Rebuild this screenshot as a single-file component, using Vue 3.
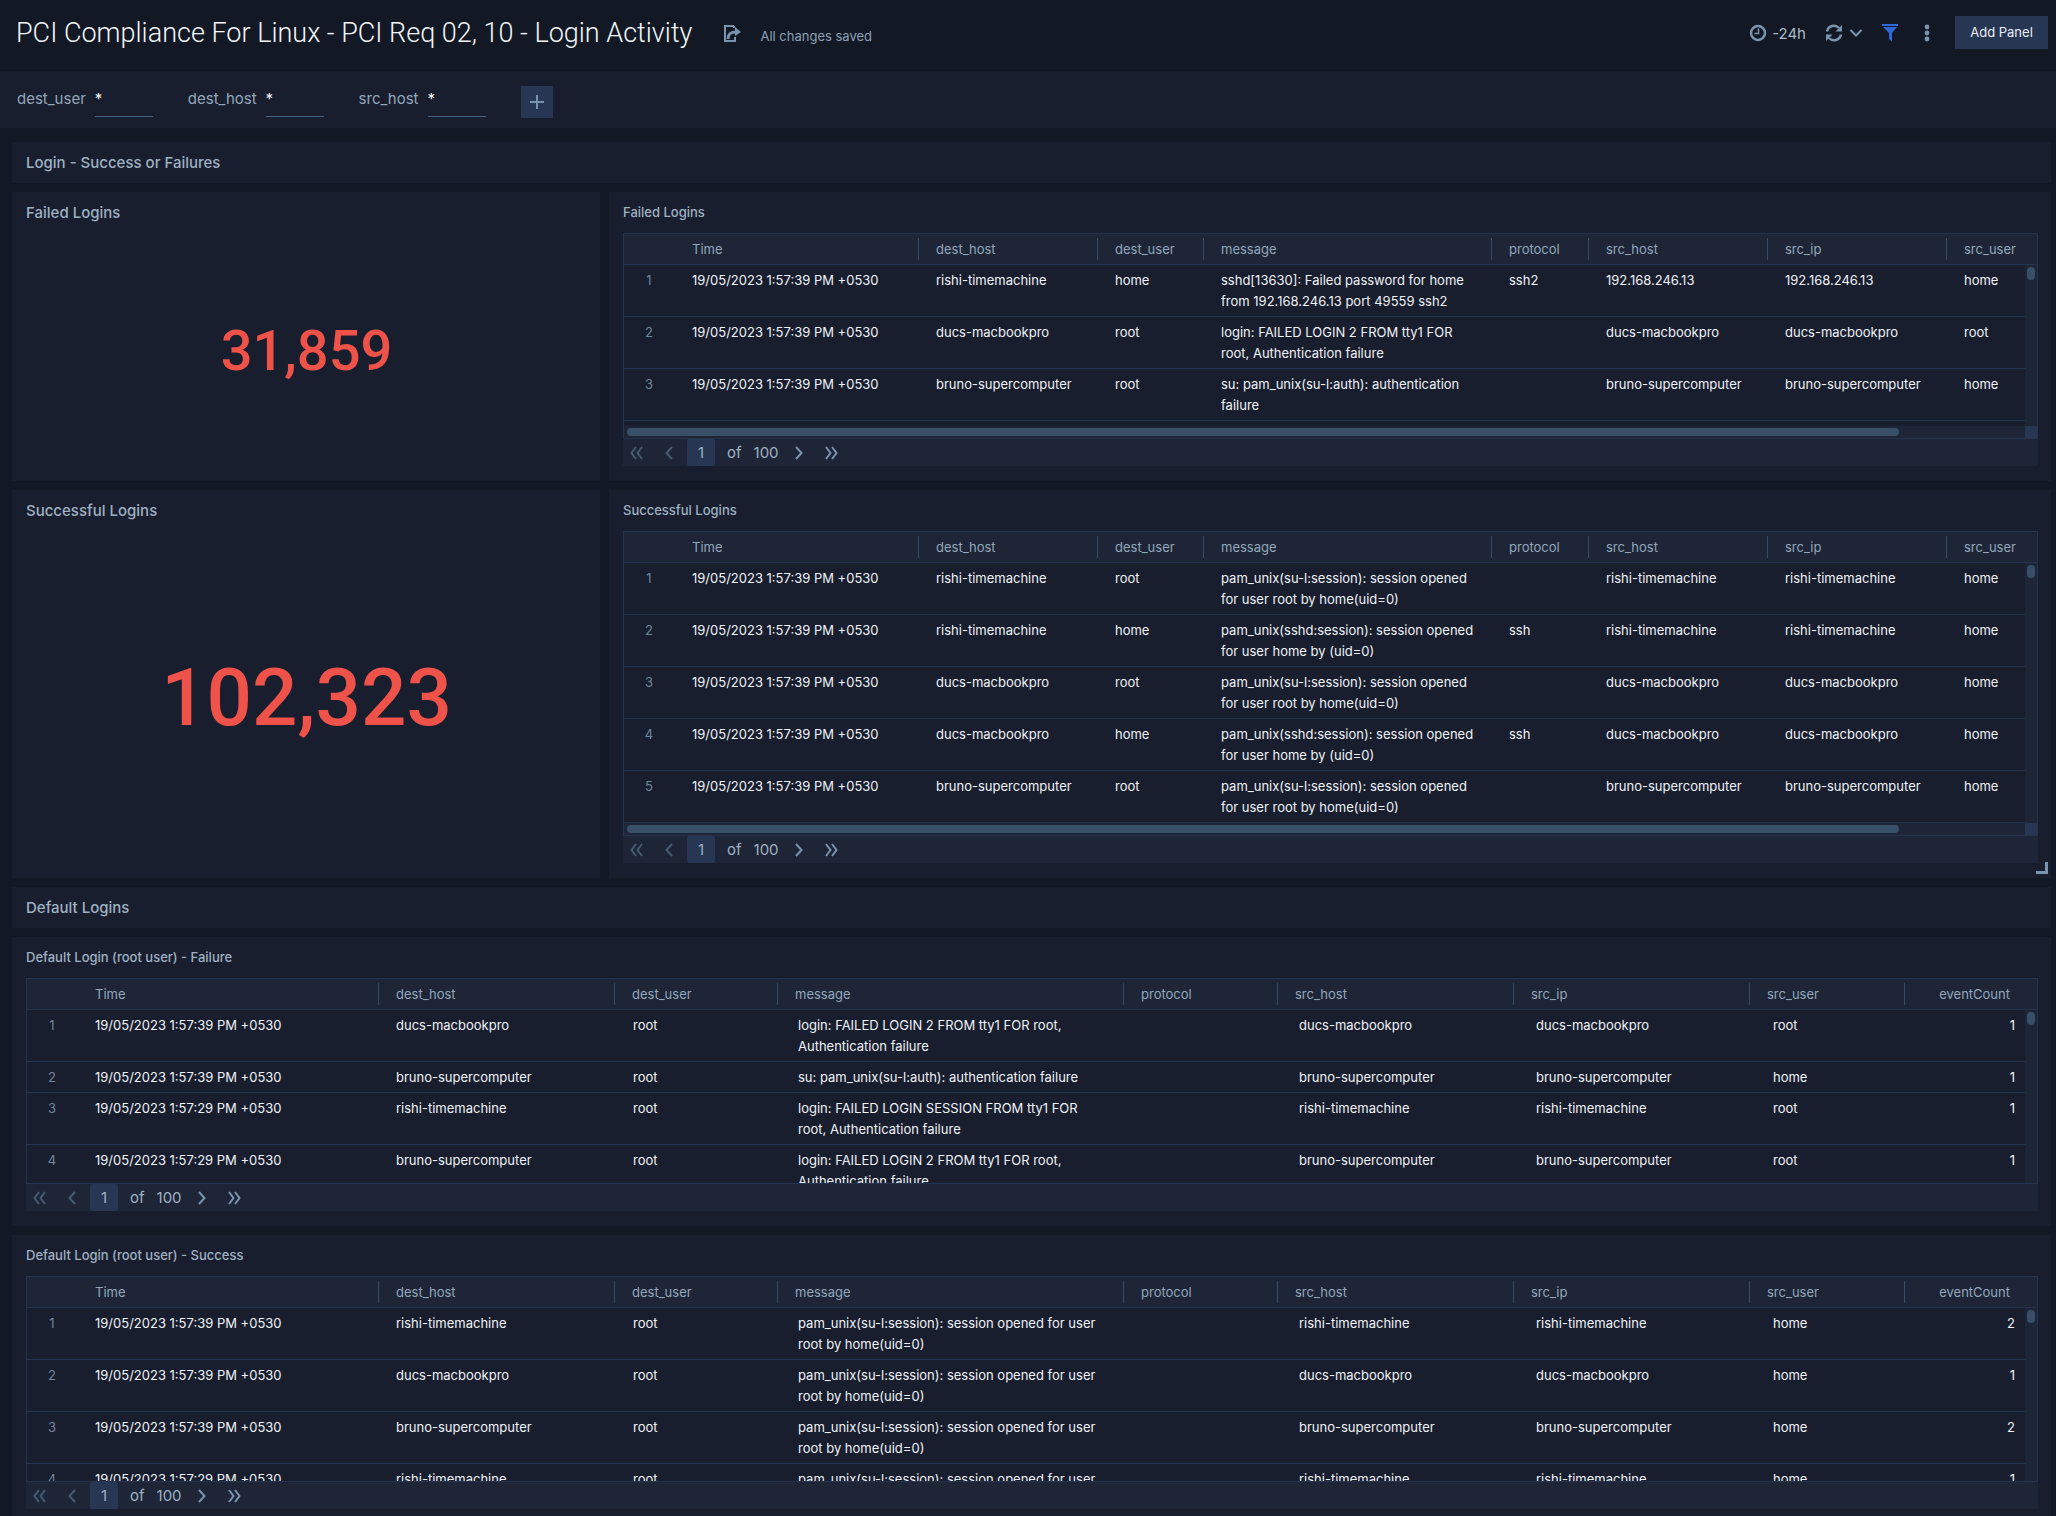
<script setup>
import { ref } from 'vue'

const variables = ref([
  { name: 'dest_user', value: '*' },
  { name: 'dest_host', value: '*' },
  { name: 'src_host', value: '*' },
])

const T39 = '19/05/2023 1:57:39 PM +0530'
const T29 = '19/05/2023 1:57:29 PM +0530'
const RISHI = 'rishi-timemachine'
const DUCS = 'ducs-macbookpro'
const BRUNO = 'bruno-supercomputer'
const SU_OPEN = 'pam_unix(su-l:session): session opened for user root by home(uid=0)'
const SSH_OPEN = 'pam_unix(sshd:session): session opened for user home by (uid=0)'

const names = ['Time', 'dest_host', 'dest_user', 'message', 'protocol', 'src_host', 'src_ip', 'src_user']

const narrow = {
  columns: names,
  head: [50, 244, 179, 106, 288, 97, 179, 179, 91],
  body: [50, 244, 179, 106, 288, 97, 179, 179, 79],
}
const wide = {
  columns: [...names, 'eventCount'],
  head: [50, 301, 236, 163, 346, 154, 236, 236, 155, 133],
  body: [50, 301, 237, 165, 347, 154, 237, 237, 155, 115],
}

const panels = [
  {
    kind: 'value', title: 'Failed Logins', value: '31,859', size: 'medium',
  },
  {
    kind: 'table', title: 'Failed Logins', layout: narrow, view: 'rows-3', scrollX: true,
    rows: [
      [T39, RISHI, 'home', 'sshd[13630]: Failed password for home from 192.168.246.13 port 49559 ssh2', 'ssh2', '192.168.246.13', '192.168.246.13', 'home'],
      [T39, DUCS, 'root', 'login: FAILED LOGIN 2 FROM tty1 FOR root, Authentication failure', '', DUCS, DUCS, 'root'],
      [T39, BRUNO, 'root', 'su: pam_unix(su-l:auth): authentication failure', '', BRUNO, BRUNO, 'home'],
    ],
  },
  {
    kind: 'value', title: 'Successful Logins', value: '102,323', size: 'large',
  },
  {
    kind: 'table', title: 'Successful Logins', layout: narrow, view: 'rows-5', scrollX: true, resize: true,
    rows: [
      [T39, RISHI, 'root', SU_OPEN, '', RISHI, RISHI, 'home'],
      [T39, RISHI, 'home', SSH_OPEN, 'ssh', RISHI, RISHI, 'home'],
      [T39, DUCS, 'root', SU_OPEN, '', DUCS, DUCS, 'home'],
      [T39, DUCS, 'home', SSH_OPEN, 'ssh', DUCS, DUCS, 'home'],
      [T39, BRUNO, 'root', SU_OPEN, '', BRUNO, BRUNO, 'home'],
    ],
  },
  { kind: 'heading', title: 'Default Logins' },
  {
    kind: 'table', title: 'Default Login (root user) - Failure', layout: wide, view: 'rows-3', full: true,
    rows: [
      [T39, DUCS, 'root', 'login: FAILED LOGIN 2 FROM tty1 FOR root, Authentication failure', '', DUCS, DUCS, 'root', '1'],
      [T39, BRUNO, 'root', 'su: pam_unix(su-l:auth): authentication failure', '', BRUNO, BRUNO, 'home', '1'],
      [T29, RISHI, 'root', 'login: FAILED LOGIN SESSION FROM tty1 FOR root, Authentication failure', '', RISHI, RISHI, 'root', '1'],
      [T29, BRUNO, 'root', 'login: FAILED LOGIN 2 FROM tty1 FOR root, Authentication failure', '', BRUNO, BRUNO, 'root', '1'],
    ],
  },
  {
    kind: 'table', title: 'Default Login (root user) - Success', layout: wide, view: 'rows-3', full: true,
    rows: [
      [T39, RISHI, 'root', SU_OPEN, '', RISHI, RISHI, 'home', '2'],
      [T39, DUCS, 'root', SU_OPEN, '', DUCS, DUCS, 'home', '1'],
      [T39, BRUNO, 'root', SU_OPEN, '', BRUNO, BRUNO, 'home', '2'],
      [T29, RISHI, 'root', SU_OPEN, '', RISHI, RISHI, 'home', '1'],
    ],
  },
]
</script>

<template>
  <div class="app">
    <header class="topbar">
      <h1>PCI Compliance For Linux - PCI Req 02, 10 - Login Activity</h1>
      <button class="icon-btn share" aria-label="Share">
        <svg width="20" height="18" viewBox="0 0 20 18" fill="none" stroke="currentColor" stroke-width="2">
          <path d="M11 1H2v15h10v-4M11 1v2" />
          <path d="M5 14c0-5 2-7 8-7" stroke-width="3" />
          <path d="M12 2l6 5-6 4z" fill="currentColor" stroke="none" />
        </svg>
      </button>
      <span class="saved">All changes saved</span>
      <div class="tools">
        <button class="icon-btn time">
          <svg width="18" height="18" viewBox="0 0 18 18" fill="none" stroke="currentColor">
            <circle cx="9" cy="9" r="7" stroke-width="2.500" />
            <path d="M9.500 4.500V9.500H5.500" stroke-width="1.500" />
          </svg>
          <span>-24h</span>
        </button>
        <button class="icon-btn refresh" aria-label="Refresh">
          <svg width="18" height="18" viewBox="0 0 18 18" fill="none" stroke="currentColor" stroke-width="2.500">
            <path d="M2 7.500A7 7 0 0 1 14 4M16 10.500A7 7 0 0 1 4 14" />
            <path d="M17 1v6.500h-6.500zM1 17v-6.500h6.500z" fill="currentColor" stroke="none" />
          </svg>
          <svg width="14" height="8" viewBox="0 0 14 8" fill="none" stroke="currentColor" stroke-width="2">
            <path d="M1.500 1l5.500 5.500L12.500 1" />
          </svg>
        </button>
        <button class="icon-btn filter" aria-label="Filter">
          <svg width="18" height="18" viewBox="0 0 18 18" fill="currentColor">
            <path d="M1 0h16v2H1zM2 3h14l-5 6v8.500l-3-2.500V9z" />
          </svg>
        </button>
        <button class="icon-btn more" aria-label="More">
          <svg width="6" height="18" viewBox="0 0 6 18" fill="currentColor">
            <circle cx="3" cy="3" r="2.400" /><circle cx="3" cy="9" r="2.400" /><circle cx="3" cy="15" r="2.400" />
          </svg>
        </button>
        <button class="add-panel">Add Panel</button>
      </div>
    </header>

    <form class="filters" @submit.prevent>
      <div v-for="v in variables" :key="v.name" class="variable">
        <label :for="'var-' + v.name">{{ v.name }}</label>
        <input :id="'var-' + v.name" v-model="v.value" type="text">
      </div>
      <button class="add-variable" type="button" aria-label="Add variable">
        <svg width="14" height="14" viewBox="0 0 14 14" stroke="currentColor" stroke-width="2"><path d="M7 0v14M0 7h14" /></svg>
      </button>
    </form>

    <main class="board">
      <section class="panel heading"><h2>Login - Success or Failures</h2></section>
      <section
        v-for="(p, i) in panels" :key="i"
        class="panel" :class="[p.kind, { full: p.full }]"
      >
        <h2>{{ p.title }}</h2>
        <div v-if="p.kind === 'value'" class="figure" :class="p.size">{{ p.value }}</div>
        <template v-if="p.kind === 'table'">
          <div class="grid">
            <table class="head">
              <colgroup><col v-for="(w, c) in p.layout.head" :key="c" :style="{ width: w + 'px' }"></colgroup>
              <thead>
                <tr>
                  <th class="index"></th>
                  <th v-for="c in p.layout.columns" :key="c" :class="{ num: c === 'eventCount' }">{{ c }}</th>
                </tr>
              </thead>
            </table>
            <div class="view" :class="p.view">
              <div class="rows">
                <table>
                  <colgroup><col v-for="(w, c) in p.layout.body" :key="c" :style="{ width: w + 'px' }"></colgroup>
                  <tbody>
                    <tr v-for="(r, n) in p.rows" :key="n">
                      <td class="index">{{ n + 1 }}</td>
                      <td v-for="(cell, c) in r" :key="c" :class="{ num: c === 8 }">{{ cell }}</td>
                    </tr>
                  </tbody>
                </table>
              </div>
              <div class="track-y"><i></i></div>
              <div v-if="p.scrollX" class="track-x"><i></i></div>
            </div>
          </div>
          <nav class="pager" aria-label="Pages">
            <button disabled aria-label="First page"><svg width="13" height="14" viewBox="0 0 13 14"><path d="M6 1L1.500 7L6 13M12 1L7.500 7L12 13" /></svg></button>
            <button disabled aria-label="Previous page"><svg width="8" height="14" viewBox="0 0 8 14"><path d="M7 1L1.500 7L7 13" /></svg></button>
            <input type="text" value="1" aria-label="Page">
            <span>of</span>
            <span>100</span>
            <button aria-label="Next page"><svg width="8" height="14" viewBox="0 0 8 14"><path d="M1 1L6.500 7L1 13" /></svg></button>
            <button aria-label="Last page"><svg width="13" height="14" viewBox="0 0 13 14"><path d="M1 1L5.500 7L1 13M7 1L11.500 7L7 13" /></svg></button>
          </nav>
        </template>
        <span v-if="p.resize" class="resize"></span>
      </section>
    </main>
  </div>
</template>

<style>
body {
  margin: 0;
  background: #121824;
}
</style>

<style scoped>
.app {
  height: 100vh;
  overflow: hidden;
  background: #121824;
  color: #9fb1c1;
  font: 13px/21px Inter, "Liberation Sans", sans-serif;
}
.app * {
  box-sizing: border-box;
}
button,
input {
  font: inherit;
  color: inherit;
  border: 0;
  padding: 0;
  margin: 0;
  background: none;
}
svg {
  display: block;
}

.topbar {
  display: flex;
  align-items: center;
  height: 71px;
  padding: 0 8px 6px 16px;
}
h1 {
  margin: 0;
  font: 300 27px/36px Roboto, sans-serif;
  color: #f2f5f8;
}
.icon-btn {
  display: flex;
  align-items: center;
  color: #7a94ad;
}
.share {
  margin-left: 31px;
  margin-top: 2px;
}
.saved {
  margin-left: 17px;
  margin-top: 8px;
  color: #8ba0b5;
}
.tools {
  display: flex;
  align-items: center;
  margin-left: auto;
}
.time span {
  margin-left: 5px;
  padding-top: 1px;
  font-size: 15px;
  color: #a9bacb;
}
.refresh {
  gap: 6px;
  margin-left: 19px;
}
.filter {
  margin-left: 18px;
  color: #2f66d8;
}
.more {
  margin: 0 25px;
}
.add-panel {
  width: 93px;
  height: 33px;
  background: #273652;
  color: #e9eef4;
}

.filters {
  display: flex;
  align-items: center;
  height: 57px;
  padding: 0 17px;
  background: #191e2f;
}
.variable {
  display: flex;
  align-items: center;
  margin-right: 35px;
  font-size: 15px;
  color: #93a7ba;
}
.variable input {
  width: 58px;
  height: 34px;
  margin-left: 9px;
  padding-bottom: 2px;
  border-bottom: 1px solid #45617f;
  color: #f2f5f8;
}
.variable label {
  padding-bottom: 2px;
}
.add-variable {
  display: grid;
  place-items: center;
  width: 32px;
  height: 32px;
  margin-top: 4px;
  background: #273652;
  color: #7a94ad;
}

.board {
  display: grid;
  grid-template-columns: 588px minmax(0, 1fr);
  gap: 9px;
  padding: 14px 5px 0 12px;
}
.panel {
  --cell-end: 16px;
  position: relative;
  padding: 0 13px 15px 14px;
  background: #191e2f;
}
.panel h2 {
  margin: 0;
  font-size: 15px;
  font-weight: 500;
  line-height: 41px;
}
.heading,
.full {
  grid-column: 1 / -1;
}
.full {
  --cell-end: 20px;
}
.heading {
  padding-bottom: 0;
}
.value {
  display: flex;
  flex-direction: column;
}
.table h2 {
  font-size: 13px;
}
.figure {
  flex: 1;
  display: flex;
  align-items: center;
  justify-content: center;
  font-family: Roboto, sans-serif;
  font-weight: 500;
  color: #ee5249;
}
.medium {
  padding-top: 3px;
  font-size: 56px;
}
.large {
  padding-top: 3px;
  font-size: 80px;
}

.grid {
  border: 1px solid #24344f;
  overflow: hidden;
}
table {
  width: 100%;
  table-layout: fixed;
  border-collapse: separate;
  border-spacing: 0;
}
th,
td {
  padding: 5px var(--cell-end) 4px 18px;
  text-align: left;
  vertical-align: top;
}
th {
  position: relative;
  height: 31px;
  background: #1d2537;
  border-bottom: 1px solid #24344f;
  font-weight: 400;
  color: #93a7ba;
}
th + th + th::before {
  content: "";
  position: absolute;
  left: 0;
  top: 4px;
  width: 1px;
  height: 22px;
  background: #354c65;
}
td {
  border-bottom: 1px solid #24344f;
  color: #eef2f6;
}
.index {
  padding-left: 0;
  padding-right: 0;
  text-align: center;
  color: #71869b;
}
.num {
  text-align: right;
}
th.num {
  padding-right: 27px;
}
td.num {
  padding-right: 10px;
}
.view {
  display: grid;
  grid-template-columns: minmax(0, 1fr) 12px;
  grid-template-rows: minmax(0, 1fr) auto;
  background: #273652;
}
.rows-3 {
  height: 173px;
}
.rows-5 {
  height: 272px;
}
.rows {
  overflow: hidden;
  background: #191e2f;
}
.track-y {
  padding: 2px;
  background: #1d2537;
}
.track-y i {
  display: block;
  width: 8px;
  height: 13px;
  border-radius: 4px;
  background: #375068;
}
.track-x {
  padding: 2px 0 2px 3px;
  background: #1d2537;
}
.track-x i {
  display: block;
  width: 91%;
  height: 8px;
  border-radius: 4px;
  background: #375068;
}

.pager {
  display: flex;
  align-items: center;
  height: 27px;
  padding-left: 7px;
  background: #1d2537;
  font-size: 15px;
}
.pager svg {
  fill: none;
  stroke: currentColor;
  stroke-width: 2;
}
.pager button {
  margin-right: 22px;
  color: #7a94ad;
}
.pager button:disabled {
  color: #475b71;
}
.pager button + button:disabled {
  margin-right: 14px;
}
.pager input {
  width: 28px;
  height: 27px;
  margin-right: 12px;
  border-radius: 2px;
  background: #273652;
  text-align: center;
}
.pager span {
  margin-right: 12px;
}
.pager span + button {
  margin-left: 4px;
}
.resize {
  position: absolute;
  right: 3px;
  bottom: 4px;
  width: 12px;
  height: 12px;
  border: solid #7a94ad;
  border-width: 0 3px 3px 0;
}
</style>
